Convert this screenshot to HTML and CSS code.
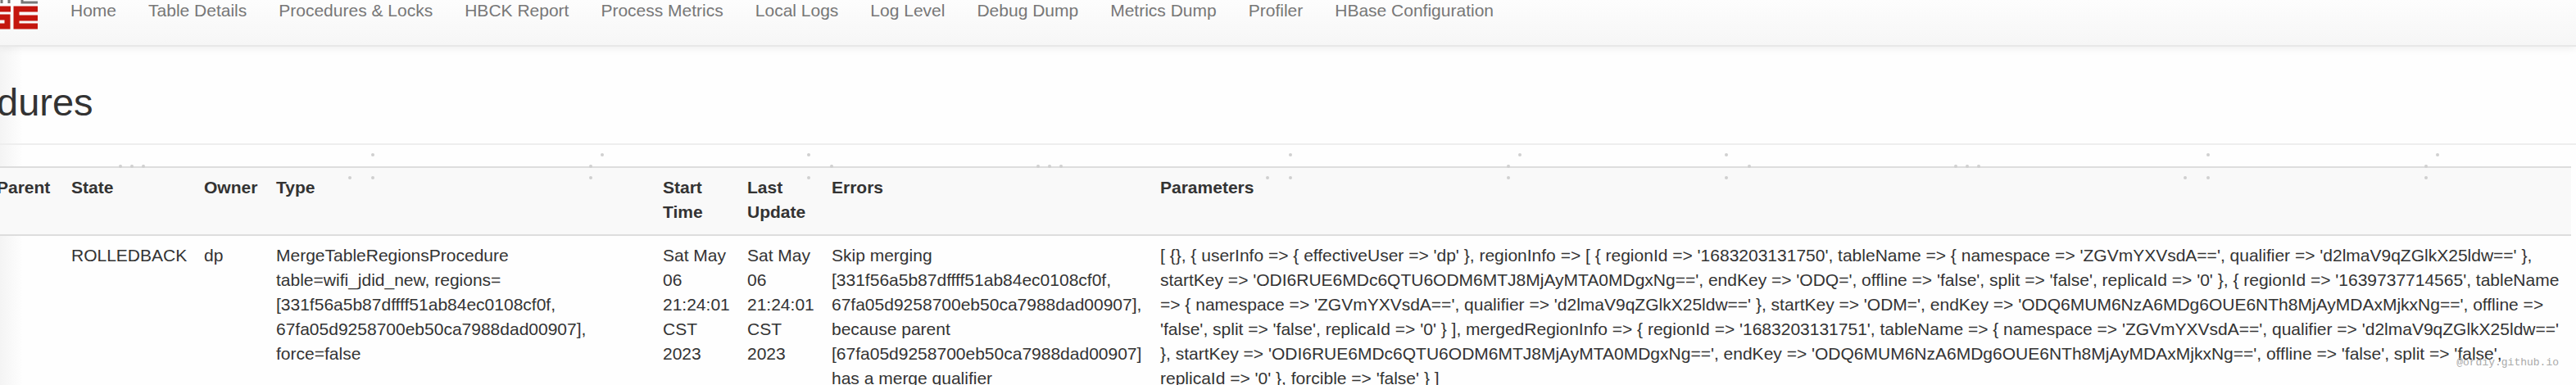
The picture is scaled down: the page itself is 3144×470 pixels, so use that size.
FILE: index.html
```html
<!DOCTYPE html>
<html lang="en">
<head>
<meta charset="utf-8">
<title>Procedures</title>
<link rel="stylesheet" href="styles.css">
</head>
<body>
<header class="navbar">
  <a class="brand" href="#" aria-label="HBase">
    <svg class="logo" width="46" height="37" viewBox="0 0 46 37" aria-hidden="true">
      <path d="M2 0V4M11 0V4M27 0V3H46" fill="none" stroke="#777" stroke-width="3"/>
      <path d="M0 11H13M0 21H9V32H0" fill="none" stroke="#c4160e" stroke-width="7"/>
      <path d="M46 11H20V32H46M20 22H46" fill="none" stroke="#c4160e" stroke-width="7"/>
    </svg>
  </a>
  <nav class="menu">
    <a href="#">Home</a>
    <a href="#">Table Details</a>
    <a href="#">Procedures &amp; Locks</a>
    <a href="#">HBCK Report</a>
    <a href="#">Process Metrics</a>
    <a href="#">Local Logs</a>
    <a href="#">Log Level</a>
    <a href="#">Debug Dump</a>
    <a href="#">Metrics Dump</a>
    <a href="#">Profiler</a>
    <a href="#">HBase Configuration</a>
  </nav>
</header>
<main class="page">
  <h1 class="title">dures</h1>
  <table class="procedures">
    <colgroup>
      <col class="c-parent"><col class="c-state"><col class="c-owner"><col class="c-type">
      <col class="c-time"><col class="c-time"><col class="c-errors"><col>
    </colgroup>
    <thead>
      <tr><th>Parent</th><th>State</th><th>Owner</th><th>Type</th><th>Start Time</th><th>Last Update</th><th>Errors</th><th>Parameters</th></tr>
    </thead>
    <tbody>
      <tr>
        <td></td>
        <td>ROLLEDBACK</td>
        <td>dp</td>
        <td>MergeTableRegionsProcedure table=wifi_jdid_new, regions= [331f56a5b87dffff51ab84ec0108cf0f, 67fa05d9258700eb50ca7988dad00907], force=false</td>
        <td>Sat May 06 21:24:01 CST 2023</td>
        <td>Sat May 06 21:24:01 CST 2023</td>
        <td>Skip merging [331f56a5b87dffff51ab84ec0108cf0f, 67fa05d9258700eb50ca7988dad00907], because parent [67fa05d9258700eb50ca7988dad00907] has a merge qualifier</td>
        <td>[ {}, { userInfo =&gt; { effectiveUser =&gt; 'dp' }, regionInfo =&gt; [ { regionId =&gt; '1683203131750', tableName =&gt; { namespace =&gt; 'ZGVmYXVsdA==', qualifier =&gt; 'd2lmaV9qZGlkX25ldw==' }, startKey =&gt; 'ODI6RUE6MDc6QTU6ODM6MTJ8MjAyMTA0MDgxNg==', endKey =&gt; 'ODQ=', offline =&gt; 'false', split =&gt; 'false', replicaId =&gt; '0' }, { regionId =&gt; '1639737714565', tableName =&gt; { namespace =&gt; 'ZGVmYXVsdA==', qualifier =&gt; 'd2lmaV9qZGlkX25ldw==' }, startKey =&gt; 'ODM=', endKey =&gt; 'ODQ6MUM6NzA6MDg6OUE6NTh8MjAyMDAxMjkxNg==', offline =&gt; 'false', split =&gt; 'false', replicaId =&gt; '0' } ], mergedRegionInfo =&gt; { regionId =&gt; '1683203131751', tableName =&gt; { namespace =&gt; 'ZGVmYXVsdA==', qualifier =&gt; 'd2lmaV9qZGlkX25ldw==' }, startKey =&gt; 'ODI6RUE6MDc6QTU6ODM6MTJ8MjAyMTA0MDgxNg==', endKey =&gt; 'ODQ6MUM6NzA6MDg6OUE6NTh8MjAyMDAxMjkxNg==', offline =&gt; 'false', split =&gt; 'false', replicaId =&gt; '0' }, forcible =&gt; 'false' } ]</td>
      </tr>
    </tbody>
  </table>
</main>
<svg class="specks" aria-hidden="true">
  <defs>
    <pattern id="dots" width="1120" height="34" patternUnits="userSpaceOnUse">
      <g fill="#d0d0d0">
        <circle cx="455" cy="3" r="2"/><circle cx="735" cy="3" r="2"/><circle cx="987" cy="3" r="2"/>
        <circle cx="147" cy="17" r="2"/><circle cx="161" cy="17" r="2"/><circle cx="175" cy="17" r="2"/>
        <circle cx="721" cy="17" r="2"/><circle cx="1015" cy="17" r="2"/>
        <circle cx="427" cy="31" r="2"/><circle cx="455" cy="31" r="2"/><circle cx="721" cy="31" r="2"/><circle cx="987" cy="31" r="2"/>
      </g>
    </pattern>
  </defs>
  <rect width="100%" height="34" fill="url(#dots)"/>
</svg>
<div class="watermark">@ordiy.github.io</div>
</body>
</html>
```
FILE: styles.css
```css
* {
  box-sizing: border-box;
}

body {
  position: relative;
  height: 100vh;
  margin: 0;
  overflow: hidden;
  background: #fefefe linear-gradient(to right, #f4f4f4, #fefefe) no-repeat left top / 28px 100%;
  color: #333;
  font: 21px/30px "Liberation Sans", Arial, sans-serif;
}

.navbar {
  position: relative;
  display: flex;
  align-items: flex-start;
  height: 57px;
  border-bottom: 2px solid #e8e8e8;
  background: linear-gradient(#fdfdfd, #f6f6f6);
  box-shadow: 0 1px 10px rgba(0, 0, 0, 0.08);
}

.logo {
  display: block;
}

.menu {
  display: flex;
  gap: 39px;
  padding-left: 40px;
}

.menu a {
  margin-top: -2px;
  color: #777;
  text-decoration: none;
  white-space: nowrap;
}

.page {
  margin: 0 6px 0 -4px;
}

.title {
  margin: 0 -6px 26px 0;
  padding: 39px 0 22px;
  border-bottom: 2px solid #eee;
  font-size: 47px;
  font-weight: normal;
  line-height: 57px;
}

.procedures {
  width: 100%;
  border-collapse: collapse;
  table-layout: fixed;
}

.procedures th,
.procedures td {
  padding: 9px 10px 12px 11px;
  border-top: 2px solid #ddd;
  text-align: left;
  vertical-align: top;
}

.procedures th:first-child,
.procedures td:first-child {
  padding-left: 0;
}

.procedures th {
  background: #f9f9f9;
}

.c-parent { width: 80px; }
.c-state { width: 162px; }
.c-owner { width: 88px; }
.c-type { width: 472px; }
.c-time { width: 103px; }
.c-errors { width: 401px; }

.specks {
  position: absolute;
  top: 186px;
  left: 0;
  width: 100%;
  height: 34px;
  pointer-events: none;
}

.watermark {
  position: absolute;
  right: 21px;
  bottom: 17px;
  color: #aaa;
  font: 13px/20px "Liberation Mono", monospace;
}
```
